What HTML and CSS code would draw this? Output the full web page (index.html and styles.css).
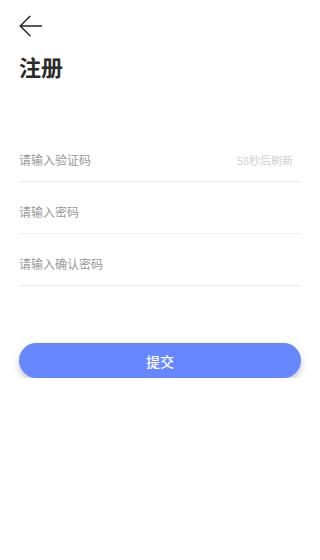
FILE: index.html
```html
<!DOCTYPE html>
<html lang="zh-CN">
<head>
<meta charset="utf-8">
<meta name="viewport" content="width=device-width, initial-scale=1">
<title>注册</title>
<link rel="stylesheet" href="styles.css">
</head>
<body>
<div class="page">
  <div class="back">
    <svg width="24" height="22" viewBox="0 0 24 22" fill="none" stroke="#222" stroke-width="1.4" stroke-linecap="round" stroke-linejoin="round">
      <path d="M22.5 11H1.5"/>
      <path d="M11 1.2L1.2 11L11 20.8"/>
    </svg>
  </div>
  <h1 class="title">注册</h1>
  <div class="form">
    <div class="row">
      <span class="ph">请输入验证码</span>
      <span class="count">58秒后刷新</span>
    </div>
    <div class="row">
      <span class="ph">请输入密码</span>
    </div>
    <div class="row">
      <span class="ph">请输入确认密码</span>
    </div>
  </div>
  <button class="submit">提交</button>
</div>
</body>
</html>
```
FILE: styles.css
```css
html, body {
  margin: 0;
  padding: 0;
  background: #fff;
}
body {
  font-family: "Noto Sans CJK SC", "Noto Sans", sans-serif;
  color: #222;
}
.page {
  padding: 15px 19px 0 19px;
  display: flex;
  flex-direction: column;
}
.back {
  height: 22px;
  display: flex;
  align-items: center;
}
.back svg {
  display: block;
}
.title {
  margin: 14px 0 0 0;
  font-size: 22px;
  line-height: 30px;
  font-weight: 700;
  color: #2a2a2a;
}
.form {
  margin-top: 49px;
  display: flex;
  flex-direction: column;
}
.row {
  height: 51px;
  border-bottom: 1px solid #eeeeee;
  display: flex;
  align-items: flex-end;
  justify-content: space-between;
}
.row span {
  font-size: 12px;
  line-height: 12px;
  margin-bottom: 15px;
}
.ph {
  color: #999;
}
.row .count {
  color: #d0d0d0;
  font-size: 11px;
  margin-right: 8px;
}
.submit {
  margin-top: 57px;
  height: 35px;
  border: none;
  border-radius: 18px;
  background: #6687ff;
  color: #fff;
  font-family: "Noto Sans CJK SC", sans-serif;
  font-size: 14px;
  font-weight: 500;
  box-shadow: 0 4px 7px rgba(0, 0, 0, 0.22);
  padding: 0;
}
```
